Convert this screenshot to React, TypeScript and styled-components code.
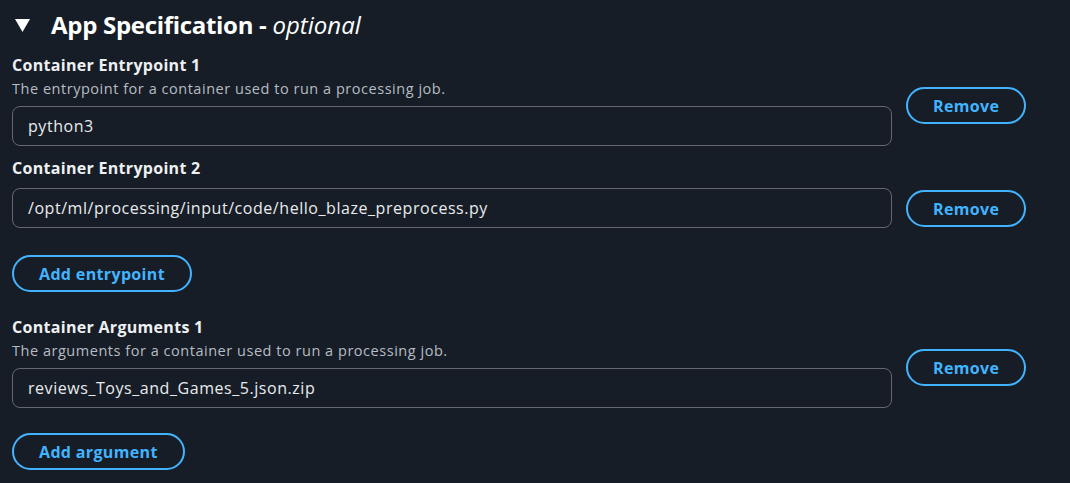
import React from "react";
import styled, { createGlobalStyle } from "styled-components";

const Global = createGlobalStyle`
  html, body {
    margin: 0;
    padding: 0;
    background: #161d26;
  }
  body {
    font-family: "Open Sans", "Noto Sans", sans-serif;
    color: #e9ebed;
  }
`;

const Page = styled.div`
  width: 1070px;
  height: 483px;
  box-sizing: border-box;
  padding: 7px 12px 0 12px;
  background: #161d26;
  overflow: hidden;
`;

const Header = styled.div`
  display: flex;
  align-items: center;
  gap: 21px;
  height: 38px;
  padding-left: 3px;
  margin-top: -1px;
  margin-bottom: 10px;
`;

const Caret = styled.svg`
  width: 15px;
  height: 13px;
  flex: none;
`;

const Title = styled.h2`
  margin: 0;
  font-size: 24px;
  line-height: 32px;
  font-weight: 700;
  color: #ffffff;
  letter-spacing: -0.3px;
`;

const Optional = styled.span`
  font-weight: 400;
  font-style: italic;
  letter-spacing: 0;
`;

const Row = styled.div<{ $gap: number }>`
  display: grid;
  grid-template-columns: 880px auto;
  column-gap: 14px;
  align-items: start;
  margin-bottom: ${(p) => p.$gap}px;
`;

const Field = styled.div`
  display: flex;
  flex-direction: column;
`;

const Label = styled.label`
  font-size: 16px;
  line-height: 22px;
  font-weight: 700;
  letter-spacing: 0.3px;
  color: #eef0f2;
`;

const Description = styled.div`
  font-size: 14.5px;
  line-height: 20px;
  letter-spacing: 0.53px;
  color: #b6bcc4;
  margin-top: 3px;
`;

const Input = styled.input<{ $top: number }>`
  box-sizing: border-box;
  width: 880px;
  height: 40px;
  margin-top: ${(p) => p.$top}px;
  padding: 0 15px;
  border: 1px solid #656871;
  border-radius: 8px;
  background: #161d26;
  color: #e9ebed;
  font-family: "Open Sans", "Noto Sans", sans-serif;
  font-size: 16px;
  letter-spacing: 0.55px;
  outline: none;
`;

const Button = styled.button<{ $top?: number }>`
  box-sizing: border-box;
  height: 37px;
  margin-top: ${(p) => p.$top ?? 0}px;
  padding: 0 25px;
  border: 2px solid #42b4ff;
  border-radius: 20px;
  background: transparent;
  color: #42b4ff;
  font-family: "Open Sans", "Noto Sans", sans-serif;
  font-size: 16px;
  font-weight: 700;
  line-height: 22px;
  letter-spacing: 0.35px;
  cursor: pointer;
  justify-self: start;
`;

const Block = styled.div<{ $gap: number }>`
  margin-bottom: ${(p) => p.$gap}px;
`;

type Entry = {
  label: string;
  description?: string;
  value: string;
  gap: number;
};

const FieldRow = ({ label, description, value, gap }: Entry) => (
  <Row $gap={gap}>
    <Field>
      <Label>{label}</Label>
      {description && <Description>{description}</Description>}
      <Input $top={description ? 7 : 9} defaultValue={value} readOnly />
    </Field>
    <Button $top={33}>Remove</Button>
  </Row>
);

export default function App() {
  return (
    <>
      <Global />
      <Page>
        <Header>
          <Caret viewBox="0 0 15 13">
            <path d="M0 0 H15 L7.5 13 Z" fill="#ffffff" />
          </Caret>
          <Title>
            App Specification - <Optional>optional</Optional>
          </Title>
        </Header>
        <FieldRow
          label="Container Entrypoint 1"
          description="The entrypoint for a container used to run a processing job."
          value="python3"
          gap={11}
        />
        <FieldRow
          label="Container Entrypoint 2"
          value="/opt/ml/processing/input/code/hello_blaze_preprocess.py"
          gap={27}
        />
        <Block $gap={24}>
          <Button>Add entrypoint</Button>
        </Block>
        <FieldRow
          label="Container Arguments 1"
          description="The arguments for a container used to run a processing job."
          value="reviews_Toys_and_Games_5.json.zip"
          gap={25}
        />
        <Block $gap={0}>
          <Button>Add argument</Button>
        </Block>
      </Page>
    </>
  );
}
